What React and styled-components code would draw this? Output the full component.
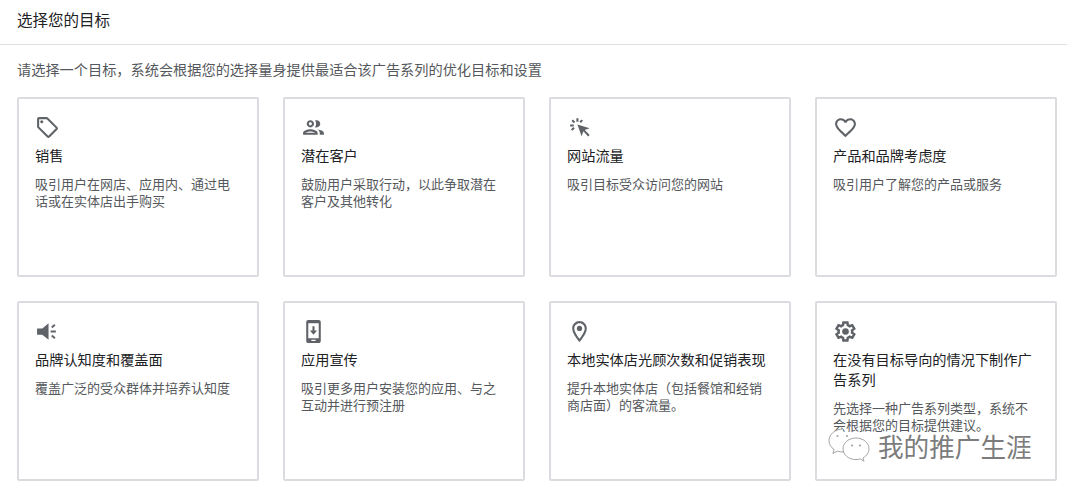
import styled, { createGlobalStyle } from 'styled-components';

const GlobalStyle = createGlobalStyle`
  html, body {
    margin: 0;
    padding: 0;
    background: #fff;
    overflow: hidden;
  }
  body {
    font-family: "Noto Sans CJK SC", "Noto Sans", sans-serif;
  }
`;

const Page = styled.div`
  position: relative;
  width: 1067px;
  height: 493px;
  overflow: hidden;
`;

const Header = styled.header`
  display: flex;
  align-items: center;
  height: 45px;
  padding: 0 17px 7px;
  box-sizing: border-box;
  border-bottom: 1px solid #e0e0e0;
  font-size: 15.5px;
  color: #202124;
`;

const Content = styled.main`
  padding: 14px 10px 0 17px;
`;

const Intro = styled.p`
  margin: 0 0 18px;
  font-size: 14.2px;
  line-height: 20px;
  color: #55585c;
  white-space: nowrap;
`;

const Grid = styled.div`
  display: grid;
  grid-template-columns: repeat(4, 242px);
  grid-auto-rows: 180px;
  gap: 24px;
`;

const Card = styled.article`
  box-sizing: border-box;
  padding: 16px 22px 0 16px;
  border: 2px solid #dadce0;
  border-radius: 2px;
  background: #fff;
`;

const Icon = styled.svg`
  display: block;
  width: 25px;
  height: 25px;
  fill: #5f6368;
`;

const CardTitle = styled.h3`
  margin: 5px 0 10px;
  font-size: 14.2px;
  line-height: 20px;
  font-weight: 400;
  color: #202124;
`;

const CardText = styled.p`
  margin: 0;
  font-size: 13px;
  line-height: 17px;
  color: #55585c;
`;

const Watermark = styled.div`
  position: absolute;
  left: 828px;
  top: 428px;
  display: flex;
  align-items: center;
  gap: 6px;
`;

const WatermarkText = styled.span`
  font-size: 25.6px;
  line-height: 36px;
  color: #7c7c7c;
  text-shadow: 1px 1px 1px #fff, -1px -1px 1px #fff;
  white-space: nowrap;
`;

const icons = {
  tag: (
    <>
      <path d="M21.41 11.41l-8.83-8.83C12.21 2.21 11.7 2 11.17 2H4c-1.1 0-2 .9-2 2v7.17c0 .53.21 1.04.59 1.41l8.83 8.83c.78.78 2.05.78 2.83 0l7.17-7.17c.79-.78.79-2.04.01-2.83zM12.83 20L4 11.17V4h7.17L20 12.83 12.83 20z" />
      <circle cx="6.5" cy="6.5" r="1.5" />
    </>
  ),
  people: (
    <path d="M9 13.75c-2.34 0-7 1.17-7 3.5V19h14v-1.75c0-2.33-4.66-3.5-7-3.5zM4.34 17c.84-.58 2.87-1.25 4.66-1.25s3.82.67 4.66 1.25H4.34zM9 12c1.93 0 3.5-1.57 3.5-3.5S10.93 5 9 5 5.5 6.57 5.5 8.5 7.07 12 9 12zm0-5c.83 0 1.5.67 1.5 1.5S9.83 10 9 10s-1.5-.67-1.5-1.5S8.17 7 9 7zm7.04 6.81c1.16.84 1.96 1.96 1.96 3.44V19h4v-1.75c0-2.02-3.5-3.17-5.96-3.44zM15 12c1.93 0 3.5-1.57 3.5-3.5S16.93 5 15 5c-.54 0-1.04.13-1.5.35.63.89 1 1.98 1 3.15s-.37 2.26-1 3.15c.46.22.96.35 1.5.35z" />
  ),
  click: (
    <>
      <path d="M10 9l4 11.500 1.700-4.800 4.600 4.900 1.500-1.500-4.800-4.700 4.700-1.700z" />
      <path d="M9 3h2v3.500H9zM3 9h3.500v2H3zM4.300 5.700l1.400-1.400 2.200 2.200-1.400 1.400zM14 4.200l1.400 1.400-2.100 2.100-1.400-1.400zM6 11.600l1.400 1.400-2.200 2.200-1.400-1.400z" />
    </>
  ),
  heart: (
    <path d="M16.5 3c-1.74 0-3.41.81-4.5 2.09C10.91 3.81 9.24 3 7.5 3 4.42 3 2 5.42 2 8.5c0 3.78 3.4 6.86 8.55 11.54L12 21.35l1.45-1.32C18.6 15.36 22 12.28 22 8.5 22 5.42 19.58 3 16.5 3zm-4.4 15.55l-.1.1-.1-.1C7.14 14.24 4 11.39 4 8.5 4 6.5 5.5 5 7.5 5c1.54 0 3.04.99 3.57 2.36h1.87C13.46 5.99 14.96 5 16.5 5c2 0 3.5 1.5 3.5 3.5 0 2.89-3.14 5.74-7.9 10.05z" />
  ),
  speaker: (
    <>
      <path d="M2 9h5l6-5v16l-6-5H2z" />
      <path d="M15 11h5v2h-5zM15.500 7.500l3-2.600 1.200 1.400-3 2.600zM15.500 16.500l1.200-1.400 3 2.600-1.200 1.400z" />
    </>
  ),
  phone: (
    <path
      fillRule="evenodd"
      d="M7 1h10c1.1 0 2 .9 2 2v18c0 1.1-.9 2-2 2H7c-1.1 0-2-.9-2-2V3c0-1.1.9-2 2-2zm0 3v14.500h10V4zm3 16h4v1.200h-4zM11 7h2v4h2.500L12 15l-3.500-4H11z"
    />
  ),
  pin: (
    <>
      <path d="M12 2C8.13 2 5 5.13 5 9c0 5.25 7 13 7 13s7-7.75 7-13c0-3.87-3.13-7-7-7zM7 9c0-2.76 2.24-5 5-5s5 2.24 5 5c0 2.88-2.88 7.19-5 9.88C9.92 16.21 7 11.85 7 9z" />
      <circle cx="12" cy="9" r="2.5" />
    </>
  ),
  gear: (
    <>
      <path
        fill="none"
        stroke="#5f6368"
        strokeWidth="2.4"
        d="M18.400 12c0 .400-.040.750-.100 1.100l2.100 1.650-1.900 3.300-2.500-1c-.550.450-1.150.800-1.800 1.050l-.400 2.650h-3.800l-.400-2.650c-.650-.250-1.250-.600-1.800-1.050l-2.500 1-1.900-3.300 2.100-1.650c-.060-.350-.100-.700-.100-1.100s.040-.750.100-1.100l-2.100-1.650 1.900-3.300 2.500 1c.550-.450 1.150-.800 1.800-1.050l.400-2.650h3.800l.400 2.650c.650.250 1.250.600 1.800 1.050l2.500-1 1.900 3.300-2.100 1.650c.060.350.100.700.100 1.100z"
      />
      <circle cx="12" cy="12" r="3.200" />
    </>
  ),
};

const goals = [
  { icon: 'tag', title: '销售', text: '吸引用户在网店、应用内、通过电话或在实体店出手购买' },
  { icon: 'people', title: '潜在客户', text: '鼓励用户采取行动，以此争取潜在客户及其他转化' },
  { icon: 'click', title: '网站流量', text: '吸引目标受众访问您的网站' },
  { icon: 'heart', title: '产品和品牌考虑度', text: '吸引用户了解您的产品或服务' },
  { icon: 'speaker', title: '品牌认知度和覆盖面', text: '覆盖广泛的受众群体并培养认知度' },
  { icon: 'phone', title: '应用宣传', text: '吸引更多用户安装您的应用、与之互动并进行预注册' },
  { icon: 'pin', title: '本地实体店光顾次数和促销表现', text: '提升本地实体店（包括餐馆和经销商店面）的客流量。' },
  { icon: 'gear', title: '在没有目标导向的情况下制作广告系列', text: '先选择一种广告系列类型，系统不会根据您的目标提供建议。' },
];

const WechatMark = () => (
  <svg width="44" height="36" viewBox="0 0 44 36" fill="#fff" stroke="#a5a5a5" strokeWidth="1">
    <path d="M15 1C7.300 1 1 6.200 1 12.600c0 3.700 2 6.900 5.200 9l-1.300 3.900 4.500-2.400c1.800.6 3.700.900 5.600.900 .600 0 1.100 0 1.600-.100" />
    <path d="M28 10c-7.200 0-13 4.800-13 10.800S20.800 31.600 28 31.600c1.500 0 3-.200 4.300-.700l3.700 2.300-1-3.300c3.800-2 6-5.700 6-9.100C41 14.800 35.200 10 28 10z" />
    <circle cx="9.500" cy="8" r="1.100" fill="#a5a5a5" stroke="none" />
    <circle cx="19" cy="8" r="1.100" fill="#a5a5a5" stroke="none" />
    <circle cx="24" cy="17.500" r="1.100" fill="#a5a5a5" stroke="none" />
    <circle cx="32" cy="17.500" r="1.100" fill="#a5a5a5" stroke="none" />
  </svg>
);

const App = () => {
  return (
    <Page>
      <GlobalStyle />
      <Header>选择您的目标</Header>
      <Content>
        <Intro>请选择一个目标，系统会根据您的选择量身提供最适合该广告系列的优化目标和设置</Intro>
        <Grid>
          {goals.map((goal) => (
            <Card key={goal.icon}>
              <Icon viewBox="0 0 24 24">{icons[goal.icon]}</Icon>
              <CardTitle>{goal.title}</CardTitle>
              <CardText>{goal.text}</CardText>
            </Card>
          ))}
        </Grid>
      </Content>
      <Watermark>
        <WechatMark />
        <WatermarkText>我的推广生涯</WatermarkText>
      </Watermark>
    </Page>
  );
};

export default App;
